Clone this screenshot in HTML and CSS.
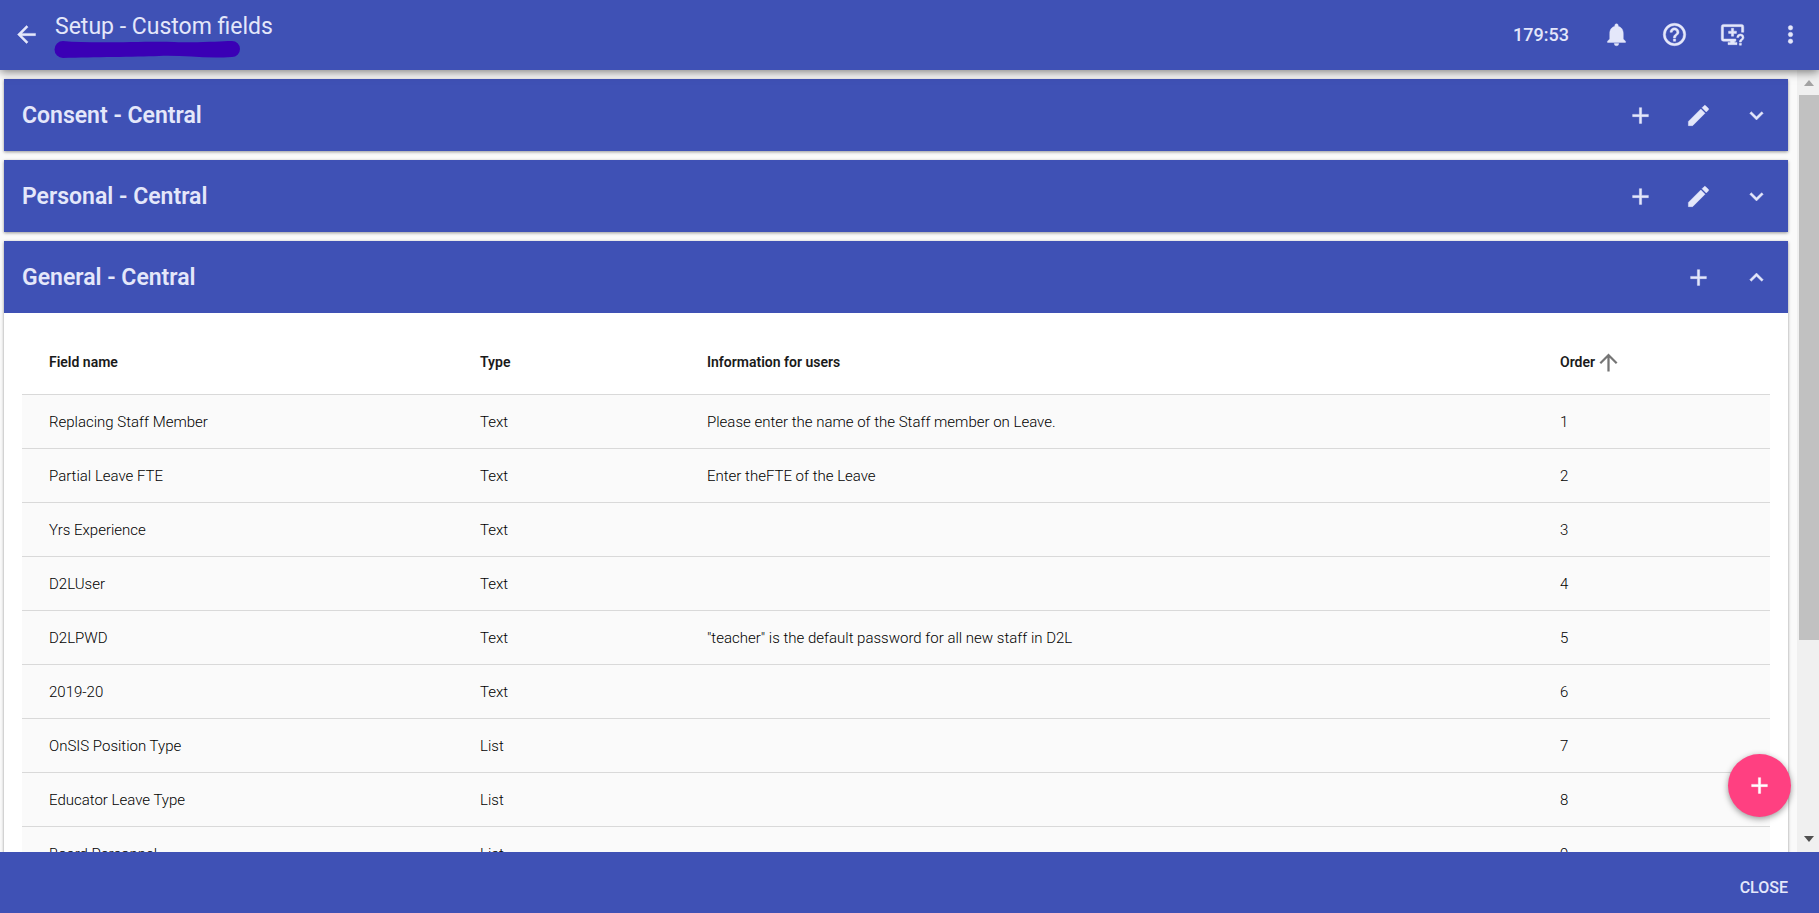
FILE: index.html
```html
<!DOCTYPE html>
<html lang="en">
<head>
<meta charset="utf-8">
<title>Setup - Custom fields</title>
<link rel="stylesheet" href="styles.css">
</head>
<body>
<svg class="sprite" aria-hidden="true">
  <symbol id="plus" viewBox="0 0 24 24"><path d="M19 13h-6v6h-2v-6H5v-2h6V5h2v6h6z"/></symbol>
  <symbol id="pencil" viewBox="0 0 24 24"><path d="M3 17.25V21h3.75L17.81 9.94l-3.75-3.75zM20.71 7.04a1 1 0 0 0 0-1.41l-2.34-2.34a1 1 0 0 0-1.41 0l-1.83 1.83 3.75 3.75z"/></symbol>
  <symbol id="down" viewBox="0 0 24 24"><path d="M16.59 8.59 12 13.17 7.41 8.59 6 10l6 6 6-6z"/></symbol>
  <symbol id="up" viewBox="0 0 24 24"><path d="m12 8-6 6 1.41 1.41L12 10.83l4.59 4.58L18 14z"/></symbol>
</svg>
<div class="app">
  <header class="topbar">
    <button class="icon-btn back" aria-label="Back"><svg viewBox="0 0 24 24"><path d="M20 11H7.83l5.59-5.59L12 4l-8 8 8 8 1.41-1.41L7.83 13H20z"/></svg></button>
    <div class="heading">
      <h1>Setup - Custom fields</h1>
      <svg class="marker" viewBox="0 0 187 18" aria-hidden="true"><path d="M9 0C40 3 90 0 120 1S165 0 178 0A8 8 0 0 1 178 16C150 18 130 14 105 15S40 16 9 17A8 8 0 0 1 9 0z"/></svg>
    </div>
    <span class="timer">179:53</span>
    <div class="actions">
      <button class="icon-btn" aria-label="Notifications"><svg viewBox="0 0 24 24"><path d="M12 22a2 2 0 0 0 2-2h-4a2 2 0 0 0 2 2zm6-6v-5c0-3.070-1.640-5.640-4.500-6.320V4a1.500 1.500 0 0 0-3 0v.68C7.630 5.360 6 7.920 6 11v5l-2 2v1h16v-1z"/></svg></button>
      <button class="icon-btn" aria-label="Help"><svg viewBox="0 0 24 24"><path d="M11 18h2v-2h-2zm1-16a10 10 0 1 0 0 20 10 10 0 0 0 0-20zm0 18a8 8 0 1 1 0-16 8 8 0 0 1 0 16zm0-14a4 4 0 0 0-4 4h2a2 2 0 1 1 4 0c0 2-3 1.750-3 5h2c0-2.250 3-2.500 3-5a4 4 0 0 0-4-4z"/></svg></button>
      <button class="icon-btn" aria-label="Remote support"><svg viewBox="0 0 24 24"><path d="M4 3h16a2 2 0 0 1 2 2v5h-2V5H4v11h11v2h-1v1h2v2H8v-2h2v-1H4a2 2 0 0 1-2-2V5a2 2 0 0 1 2-2z"/><path d="M11 6.500h2V9h2.500v2H13v2.500h-2V11H8.500V9H11z"/><path d="M19 11.500a3.200 3.200 0 0 0-3.200 3.200h1.700a1.500 1.500 0 1 1 3 0c0 1.500-2.400 1.500-2.400 4h1.800c0-1.700 2.300-2 2.300-4a3.200 3.200 0 0 0-3.200-3.200zM18.100 19.700h1.800v1.800h-1.800z"/></svg></button>
      <button class="icon-btn" aria-label="More"><svg viewBox="0 0 24 24"><circle cx="12" cy="6" r="2"/><circle cx="12" cy="12" r="2"/><circle cx="12" cy="18" r="2"/></svg></button>
    </div>
  </header>

  <div class="body">
    <main class="content">
      <section class="panel">
        <div class="panel-head"><h2>Consent - Central</h2>
          <div class="actions">
            <button class="icon-btn" aria-label="Add"><svg><use href="#plus"/></svg></button>
            <button class="icon-btn" aria-label="Edit"><svg><use href="#pencil"/></svg></button>
            <button class="icon-btn" aria-label="Expand"><svg><use href="#down"/></svg></button>
          </div></div>
      </section>
      <section class="panel">
        <div class="panel-head"><h2>Personal - Central</h2>
          <div class="actions">
            <button class="icon-btn" aria-label="Add"><svg><use href="#plus"/></svg></button>
            <button class="icon-btn" aria-label="Edit"><svg><use href="#pencil"/></svg></button>
            <button class="icon-btn" aria-label="Expand"><svg><use href="#down"/></svg></button>
          </div></div>
      </section>
      <section class="panel">
        <div class="panel-head"><h2>General - Central</h2>
          <div class="actions">
            <button class="icon-btn" aria-label="Add"><svg><use href="#plus"/></svg></button>
            <button class="icon-btn" aria-label="Collapse"><svg><use href="#up"/></svg></button>
          </div></div>
        <div class="table-wrap">
          <table>
            <colgroup><col class="c-name"><col class="c-type"><col class="c-info"><col class="c-order"></colgroup>
            <thead><tr><th>Field name</th><th>Type</th><th>Information for users</th><th aria-sort="ascending"><span class="sort">Order<svg viewBox="0 0 24 24"><path d="m4 12 1.410 1.410L11 7.830V20h2V7.830l5.580 5.590L20 12l-8-8z"/></svg></span></th></tr></thead>
            <tbody>
              <tr><td>Replacing Staff Member</td><td>Text</td><td>Please enter the name of the Staff member on Leave.</td><td>1</td></tr>
              <tr><td>Partial Leave FTE</td><td>Text</td><td>Enter theFTE of the Leave</td><td>2</td></tr>
              <tr><td>Yrs Experience</td><td>Text</td><td></td><td>3</td></tr>
              <tr><td>D2LUser</td><td>Text</td><td></td><td>4</td></tr>
              <tr><td>D2LPWD</td><td>Text</td><td>"teacher" is the default password for all new staff in D2L</td><td>5</td></tr>
              <tr><td>2019-20</td><td>Text</td><td></td><td>6</td></tr>
              <tr><td>OnSIS Position Type</td><td>List</td><td></td><td>7</td></tr>
              <tr><td>Educator Leave Type</td><td>List</td><td></td><td>8</td></tr>
              <tr><td>Board Personnel</td><td>List</td><td></td><td>9</td></tr>
            </tbody>
          </table>
        </div>
      </section>
    </main>
    <div class="scrollbar" aria-hidden="true">
      <svg class="arrow dim" viewBox="0 0 10 6"><path d="M5 0l5 6H0z"/></svg>
      <div class="track"><div class="thumb"></div></div>
      <svg class="arrow" viewBox="0 0 10 6"><path d="M0 0h10L5 6z"/></svg>
    </div>
    <button class="fab" aria-label="Add field"><svg><use href="#plus"/></svg></button>
  </div>

  <footer class="bottombar"><button class="close">CLOSE</button></footer>
</div>
</body>
</html>
```
FILE: styles.css
```css
* { box-sizing: border-box; }
body {
  margin: 0;
  font-family: Roboto, "Liberation Sans", sans-serif;
  color: #1a1a1a;
  background: #fafafa;
}
h1, h2 { margin: 0; }
button {
  border: 0;
  padding: 0;
  background: none;
  color: inherit;
  font: inherit;
  cursor: pointer;
}
svg { display: block; fill: currentColor; }
.sprite { position: absolute; width: 0; height: 0; }

.app { display: flex; flex-direction: column; height: 100vh; }

.topbar {
  display: flex;
  align-items: center;
  flex: none;
  height: 70px;
  padding: 0 15px 2px 13px;
  background: #3f51b5;
  color: #e4e7fa;
  box-shadow: 0 2px 9px rgba(0, 0, 0, .5);
  z-index: 2;
}
.heading { flex: 1; padding-top: 4px; margin-left: 14px; }
.heading h1 { padding-left: 1px; font-size: 23px; line-height: 28px; font-weight: 400; }
.marker { width: 187px; height: 18px; fill: #3a00b5; }
.timer { margin-right: 34px; font-size: 18px; font-weight: 500; }
.actions { display: flex; gap: 31px; }
.icon-btn svg { width: 27px; height: 27px; stroke: currentColor; stroke-width: 0.4px; }

.body { position: relative; display: flex; flex: 1; min-height: 0; }
.content {
  display: flex;
  flex-direction: column;
  gap: 9px;
  flex: 1;
  padding: 9px 9px 0 4px;
  overflow: hidden;
}
.panel { flex: none; background: #fff; box-shadow: 0 1px 3px rgba(0, 0, 0, .4); }
.panel-head {
  display: flex;
  align-items: center;
  justify-content: space-between;
  height: 72px;
  padding: 0 18px;
  background: #3f51b5;
  color: #e4e7fa;
}
.panel-head h2 { font-size: 23px; font-weight: 600; }
.table-wrap { padding: 18px; }
table { width: 100%; table-layout: fixed; border-collapse: collapse; }
.c-name { width: 431px; }
.c-type { width: 227px; }
.c-order { width: 237px; }
th, td { height: 54px; padding: 0 0 0 27px; text-align: left; }
th { height: 63px; font-size: 14px; font-weight: 600; }
td { padding-top: 2px; border-top: 1px solid #d9d9d9; background: #fafafa; color: #000; font-size: 15px; font-weight: 300; }
.sort { display: flex; align-items: center; }
.sort svg { width: 27px; height: 27px; fill: #757575; }

.scrollbar {
  display: flex;
  flex-direction: column;
  align-items: center;
  flex: none;
  width: 22px;
  padding: 10px 0;
  gap: 9px;
  background: #f0f0f0;
}
.arrow { width: 10px; height: 6px; margin-left: 2px; fill: #505050; }
.arrow.dim { fill: #a3a3a3; }
.track { flex: 1; align-self: stretch; padding-left: 2px; }
.thumb { height: 74.5%; background: #c1c1c1; }

.fab {
  position: absolute;
  right: 28px;
  bottom: 35px;
  display: grid;
  place-items: center;
  width: 63px;
  height: 63px;
  border-radius: 50%;
  background: #ff4081;
  color: #fff;
  box-shadow: 0 2px 6px rgba(0, 0, 0, .4);
}
.fab svg { width: 27px; height: 27px; stroke: currentColor; stroke-width: 0.4px; }

.bottombar {
  display: flex;
  align-items: center;
  justify-content: flex-end;
  flex: none;
  height: 61px;
  padding: 10px 31px 0;
  background: #3f51b5;
  color: #e4e7fa;
}
.close { font-size: 16px; font-weight: 500; }
```
